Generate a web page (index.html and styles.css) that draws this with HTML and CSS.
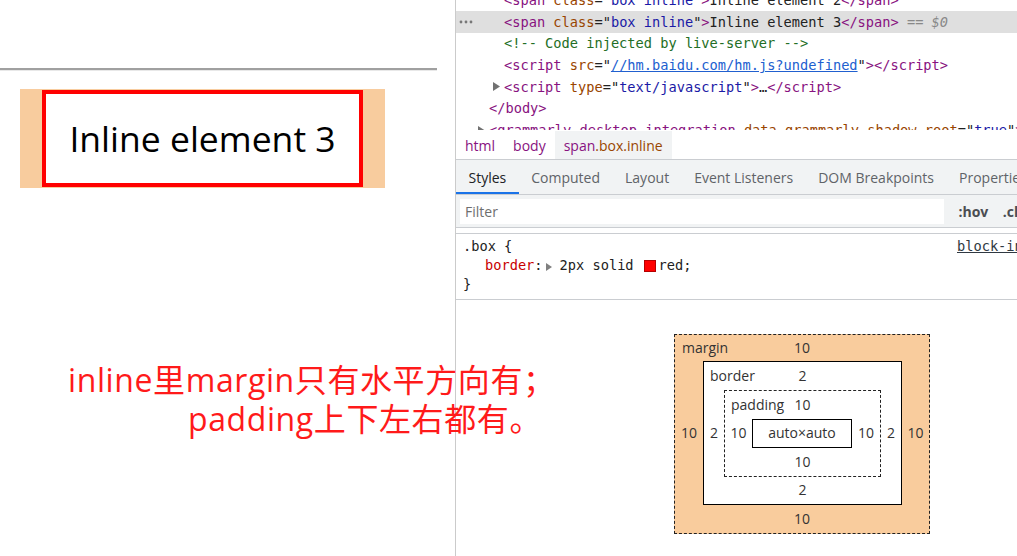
FILE: index.html
```html
<!DOCTYPE html>
<html lang="zh">
<head>
<meta charset="utf-8">
<title>inline box model</title>
<link rel="stylesheet" href="styles.css">
</head>
<body>
<div class="page">
  <section class="viewport">
    <div class="page-top"></div>
    <div class="page-rule"></div>
    <div class="demo">
      <div class="demo-margin">
        <span class="demo-box">Inline element 3</span>
      </div>
    </div>
  </section>

  <section class="devtools">
    <div class="tree">
      <div class="tree-rows">
        <div class="row lv2"><span class="arrow"></span><span class="tag">&lt;span</span>&nbsp;<span class="an">class</span>="<span class="av">box inline</span>"<span class="tag">&gt;</span>Inline element 2<span class="tag">&lt;/span&gt;</span></div>
        <div class="row sel"><span class="dots"><svg width="14" height="4" viewBox="0 0 14 4"><circle cx="2" cy="2" r="1.4" fill="#777"/><circle cx="7" cy="2" r="1.4" fill="#777"/><circle cx="12" cy="2" r="1.4" fill="#777"/></svg></span><span class="arrow"></span><span class="tag">&lt;span</span>&nbsp;<span class="an">class</span>="<span class="av">box inline</span>"<span class="tag">&gt;</span>Inline element 3<span class="tag">&lt;/span&gt;</span><span class="dollar">&nbsp;== <i>$0</i></span></div>
        <div class="row lv2"><span class="arrow"></span><span class="cm">&lt;!-- Code injected by live-server --&gt;</span></div>
        <div class="row lv2"><span class="arrow"></span><span class="tag">&lt;script</span>&nbsp;<span class="an">src</span>="<span class="lnk">//hm.baidu.com/hm.js?undefined</span>"<span class="tag">&gt;&lt;/script&gt;</span></div>
        <div class="row lv2"><span class="arrow"><svg width="8" height="9" viewBox="0 0 8 9"><polygon points="0,0 7,4.5 0,9" fill="#727272"/></svg></span><span class="tag">&lt;script</span>&nbsp;<span class="an">type</span>="<span class="av">text/javascript</span>"<span class="tag">&gt;</span>…<span class="tag">&lt;/script&gt;</span></div>
        <div class="row lv1"><span class="arrow"></span><span class="tag">&lt;/body&gt;</span></div>
        <div class="row lv1"><span class="arrow"><svg width="8" height="9" viewBox="0 0 8 9"><polygon points="0,0 7,4.5 0,9" fill="#727272"/></svg></span><span class="tag">&lt;grammarly-desktop-integration</span>&nbsp;<span class="an">data-grammarly-shadow-root</span>="<span class="av">true</span>"<span class="tag">&gt;</span>…<span class="tag">&lt;/grammarly-desktop-integration&gt;</span></div>
      </div>
    </div>

    <nav class="crumbs">
      <span class="crumb">html</span>
      <span class="crumb">body</span>
      <span class="crumb on">span<span class="crumb-cls">.box.inline</span></span>
    </nav>

    <nav class="tabs">
      <span class="tab on">Styles</span>
      <span class="tab">Computed</span>
      <span class="tab">Layout</span>
      <span class="tab">Event Listeners</span>
      <span class="tab">DOM Breakpoints</span>
      <span class="tab">Properties</span>
    </nav>

    <div class="filterbar">
      <div class="filter">Filter</div>
      <span class="tool">:hov</span>
      <span class="tool">.cls</span>
    </div>

    <div class="rules">
      <div class="rule-head"><span class="selector">.box {</span><span class="src">block-inline.html:9</span></div>
      <div class="decl"><span class="prop">border</span>:<span class="expand"><svg width="6" height="8" viewBox="0 0 6 8"><polygon points="0,0 6,4 0,8" fill="#808080"/></svg></span>2px solid&nbsp;<span class="swatch"></span>red;</div>
      <div>}</div>
    </div>

    <div class="bm">
      <div class="layer lm">
        <span class="lbl">margin</span><span class="t">10</span>
        <span class="l">10</span>
        <div class="mid layer lb">
          <span class="lbl">border</span><span class="t">2</span>
          <span class="l">2</span>
          <div class="mid layer lp">
            <span class="lbl">padding</span><span class="t">10</span>
            <span class="l">10</span>
            <div class="mid content">auto×auto</div>
            <span class="r">10</span>
            <span class="b">10</span>
          </div>
          <span class="r">2</span>
          <span class="b">2</span>
        </div>
        <span class="r">10</span>
        <span class="b">10</span>
      </div>
    </div>
  </section>

  <div class="note">
    <div class="note-l1">inline里margin只有水平方向有；</div>
    <div class="note-l2">padding上下左右都有。</div>
  </div>
</div>
</body>
</html>
```

FILE: styles.css
```css
* { box-sizing: border-box; }
html, body { margin: 0; padding: 0; }
body {
  background: #fff;
  font-family: "Open Sans", "Noto Sans", sans-serif;
  color: #222;
  overflow: hidden;
}
.page {
  position: relative;
  display: flex;
  width: 1017px;
  height: 556px;
  overflow: hidden;
}

/* left: page viewport */
.viewport {
  flex: none;
  width: 456px;
  border-right: 1px solid #cbcbcb;
}
.page-top { height: 68px; }
.page-rule {
  width: 437px;
  height: 3px;
  border-top: 2px solid #a0a0a0;
  border-bottom: 1px solid #e8e8e8;
}
.demo { padding: 18px 0 0 20px; }
.demo-margin {
  display: flex;
  width: 365px;
  padding: 1px 22px;
  background: #f8cc9e;
}
.demo-box {
  display: block;
  width: 321px;
  height: 97px;
  border: 4px solid #ff0000;
  background: #fff;
  color: #000;
  font-size: 35.5px;
  line-height: 89px;
  text-align: center;
}

/* right: devtools */
.devtools {
  flex: none;
  width: 561px;
  display: flex;
  flex-direction: column;
  overflow: hidden;
}
.tree {
  flex: none;
  height: 130px;
  overflow: hidden;
  font-family: "DejaVu Sans Mono", monospace;
  font-size: 13.67px;
}
.tree-rows { margin-top: -10.85px; }
.row {
  display: flex;
  align-items: center;
  height: 21.7px;
  white-space: nowrap;
  color: #222;
}
.lv2 { padding-left: 37px; }
.lv1 { padding-left: 22px; }
.row.sel { background: #dfdfdf; padding-left: 3px; }
.dots { flex: none; width: 34px; display: flex; align-items: center; }
.arrow { flex: none; width: 11px; display: flex; align-items: center; }
.tag { color: #881280; }
.an { color: #994500; }
.av { color: #1a1aa6; }
.cm { color: #236e25; }
.lnk { color: #2160cf; text-decoration: underline; }
.dollar { color: #888; }
.dollar i { font-style: italic; }

.crumbs {
  flex: none;
  height: 30px;
  display: flex;
  align-items: flex-end;
  border-bottom: 1px solid #cacdd1;
  font-size: 14px;
  background: #fff;
}
.crumb {
  height: 28px;
  padding: 0 9px;
  display: flex;
  align-items: center;
  color: #881280;
}
.crumb.on { background: #f1f3f4; }
.crumb-cls { color: #994500; }

.tabs {
  flex: none;
  height: 35px;
  display: flex;
  background: #f1f3f4;
  border-bottom: 1px solid #cacdd1;
  font-size: 14px;
  color: #5f6368;
  white-space: nowrap;
}
.tab {
  flex: none;
  height: 34px;
  padding: 0 12.5px;
  display: flex;
  align-items: center;
}
.tab.on { color: #202124; box-shadow: inset 0 -2px 0 #1a73e8; }

.filterbar {
  flex: none;
  height: 33px;
  display: flex;
  align-items: center;
  background: #f1f3f4;
  border-bottom: 1px solid #cacdd1;
  padding-left: 4px;
  white-space: nowrap;
}
.filter {
  flex: none;
  width: 484px;
  height: 25px;
  background: #fff;
  color: #6e6e6e;
  font-size: 14px;
  padding-left: 5px;
  display: flex;
  align-items: center;
}
.tool {
  flex: none;
  margin-left: 14.5px;
  font-size: 14px;
  font-weight: 700;
  color: #4a4d52;
}

.rules {
  flex: none;
  margin-top: 5px;
  border-top: 1px solid #cacdd1;
  border-bottom: 1px solid #cacdd1;
  padding: 3px 0 4px 7px;
  font-family: "DejaVu Sans Mono", monospace;
  font-size: 13.67px;
  line-height: 19.2px;
  white-space: nowrap;
  color: #222;
}
.rule-head { display: flex; }
.selector { flex: none; width: 494px; }
.src { color: #303942; text-decoration: underline; }
.decl { padding-left: 22px; }
.prop { color: #c80000; }
.expand {
  display: inline-block;
  width: 6px;
  height: 8px;
  margin: 0 8px 0 3px;
  vertical-align: -1px;
}
.expand svg { display: block; }
.swatch {
  display: inline-block;
  width: 12px;
  height: 12px;
  margin: 0 2.3px 0 2.4px;
  vertical-align: -2px;
  background: #ff0000;
  border: 1px solid #b40000;
}

/* box model diagram */
.bm {
  flex: none;
  margin: 34px 0 0 218px;
  font-size: 14px;
  color: #333;
  line-height: 1;
}
.layer {
  display: grid;
  grid-template-areas: "top top top" "left mid right" "bot bot bot";
  width: max-content;
}
.layer > .lbl { grid-area: top; justify-self: start; align-self: center; }
.layer > .t { grid-area: top; justify-self: center; align-self: center; }
.layer > .l { grid-area: left; justify-self: center; align-self: center; }
.layer > .r { grid-area: right; justify-self: center; align-self: center; }
.layer > .b { grid-area: bot; justify-self: center; align-self: center; }
.layer > .mid { grid-area: mid; }
.lm {
  grid-template-columns: 28px auto 27px;
  grid-template-rows: 26px auto 28px;
  border: 1px dashed #222;
  background: #f9cc9d;
}
.lm > .lbl { padding-left: 7px; }
.lb {
  grid-template-columns: 20px auto 20px;
  grid-template-rows: 28px auto 27px;
  border: 1px solid #000;
  background: #fff;
}
.lb > .lbl { padding-left: 6px; }
.lp {
  grid-template-columns: 27px auto 28px;
  grid-template-rows: 28px auto 28px;
  border: 1px dashed #222;
  background: #fff;
}
.lp > .lbl { padding-left: 6px; }
.content {
  width: 100px;
  height: 29px;
  border: 1px solid #000;
  display: flex;
  align-items: center;
  justify-content: center;
}

/* annotation overlay */
.note {
  position: absolute;
  left: 68px;
  top: 360px;
  color: #ff1a1a;
  font-family: "Open Sans", "Noto Sans CJK SC", sans-serif;
  font-size: 32px;
  line-height: 39px;
  letter-spacing: 0.6px;
  white-space: nowrap;
}
.note-l2 { padding-left: 120px; }
```
